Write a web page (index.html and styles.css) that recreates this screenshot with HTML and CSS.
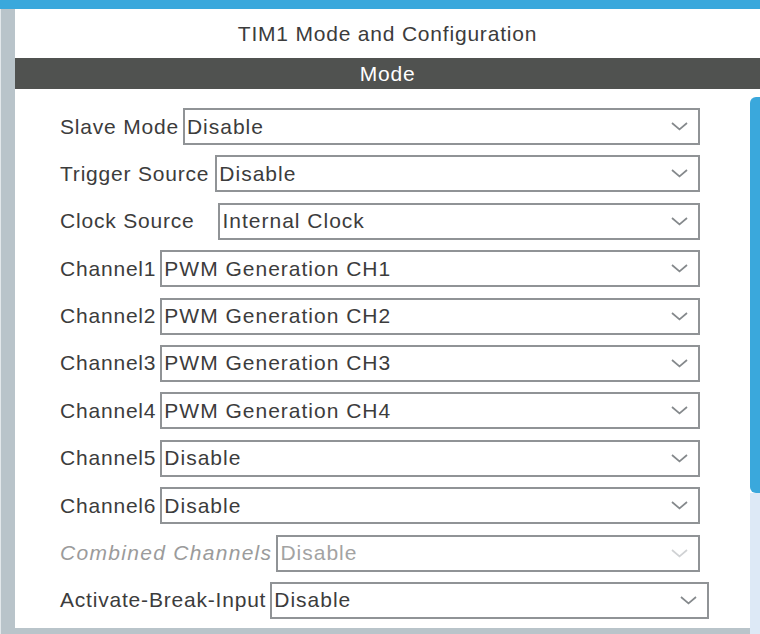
FILE: index.html
```html
<!DOCTYPE html>
<html>
<head>
<meta charset="utf-8">
<link rel="stylesheet" href="styles.css">
</head>
<body>
<div class="topbar"></div>
<div class="frame">
  <div class="side"></div>
  <div class="panel">
    <div class="title">TIM1 Mode and Configuration</div>
    <div class="section">Mode</div>
    <div class="body">
      <div class="left">
        <div class="form">
          <div class="row"><span class="label">Slave Mode</span><div class="select"><span class="val">Disable</span><svg class="chev" viewBox="0 0 17 9"><polyline points="1,1 8.5,7.5 16,1"/></svg></div></div>
          <div class="row"><span class="label trigger">Trigger Source</span><div class="select"><span class="val">Disable</span><svg class="chev" viewBox="0 0 17 9"><polyline points="1,1 8.5,7.5 16,1"/></svg></div></div>
          <div class="row"><span class="label clock">Clock Source</span><div class="select"><span class="val">Internal Clock</span><svg class="chev" viewBox="0 0 17 9"><polyline points="1,1 8.5,7.5 16,1"/></svg></div></div>
          <div class="row"><span class="label">Channel1</span><div class="select"><span class="val">PWM Generation CH1</span><svg class="chev" viewBox="0 0 17 9"><polyline points="1,1 8.5,7.5 16,1"/></svg></div></div>
          <div class="row"><span class="label">Channel2</span><div class="select"><span class="val">PWM Generation CH2</span><svg class="chev" viewBox="0 0 17 9"><polyline points="1,1 8.5,7.5 16,1"/></svg></div></div>
          <div class="row"><span class="label">Channel3</span><div class="select"><span class="val">PWM Generation CH3</span><svg class="chev" viewBox="0 0 17 9"><polyline points="1,1 8.5,7.5 16,1"/></svg></div></div>
          <div class="row"><span class="label">Channel4</span><div class="select"><span class="val">PWM Generation CH4</span><svg class="chev" viewBox="0 0 17 9"><polyline points="1,1 8.5,7.5 16,1"/></svg></div></div>
          <div class="row"><span class="label">Channel5</span><div class="select"><span class="val">Disable</span><svg class="chev" viewBox="0 0 17 9"><polyline points="1,1 8.5,7.5 16,1"/></svg></div></div>
          <div class="row"><span class="label">Channel6</span><div class="select"><span class="val">Disable</span><svg class="chev" viewBox="0 0 17 9"><polyline points="1,1 8.5,7.5 16,1"/></svg></div></div>
          <div class="row disabled"><span class="label">Combined Channels</span><div class="select"><span class="val">Disable</span><svg class="chev" viewBox="0 0 17 9"><polyline points="1,1 8.5,7.5 16,1"/></svg></div></div>
          <div class="row wide"><span class="label">Activate-Break-Input</span><div class="select"><span class="val">Disable</span><svg class="chev" viewBox="0 0 17 9"><polyline points="1,1 8.5,7.5 16,1"/></svg></div></div>
          <div class="row wide next"><span class="label"></span><div class="select"></div></div>
        </div>
        <div class="bottombar"></div>
      </div>
      <div class="scroll">
        <div class="scroll-gap"></div>
        <div class="thumb"></div>
        <div class="track"></div>
      </div>
    </div>
  </div>
</div>
</body>
</html>
```

FILE: styles.css
```css
html, body {
  margin: 0;
  padding: 0;
  width: 760px;
  height: 634px;
  overflow: hidden;
  background: #ffffff;
  font-family: "Liberation Sans", Arial, sans-serif;
}
.topbar {
  height: 9px;
  background: #3aa8dc;
}
.frame {
  display: flex;
  height: 625px;
}
.side {
  width: 14px;
  background: #b9c4ca;
  border-left: 1px solid #e3e8eb;
  flex: none;
}
.panel {
  flex: 1;
  display: flex;
  flex-direction: column;
  min-width: 0;
}
.title {
  height: 49px;
  display: flex;
  align-items: center;
  justify-content: center;
  font-size: 21px;
  letter-spacing: 0.8px;
  color: #3c3c3c;
}
.section {
  height: 31px;
  background: #505250;
  color: #ffffff;
  display: flex;
  align-items: center;
  justify-content: center;
  font-size: 21px;
  letter-spacing: 0.8px;
  padding-top: 1px;
  box-sizing: border-box;
}
.body {
  flex: 1;
  display: flex;
  min-height: 0;
}
.left {
  flex: 1;
  display: flex;
  flex-direction: column;
  min-width: 0;
}
.form {
  flex: 1;
  overflow: hidden;
  padding: 19px 0 0 45px;
  display: flex;
  flex-direction: column;
  gap: 10.4px;
}
.bottombar {
  height: 6px;
  background: #b9c4ca;
  flex: none;
}
.row {
  display: flex;
  align-items: center;
  height: 37px;
  flex: none;
  width: 640px;
}
.row.wide {
  width: 649px;
}
.label {
  font-size: 21px;
  letter-spacing: 0.8px;
  color: #3c3c3c;
  margin-right: 4px;
  white-space: nowrap;
}
.label.trigger {
  margin-right: 6px;
}
.label.clock {
  margin-right: 24px;
}
.select {
  flex: 1;
  height: 37px;
  box-sizing: border-box;
  border: 2px solid #909396;
  display: flex;
  align-items: center;
  justify-content: space-between;
  padding: 0 10px 0 2px;
  background: #ffffff;
}
.val {
  font-size: 21px;
  letter-spacing: 1px;
  color: #3c3c3c;
  white-space: nowrap;
}
.chev {
  width: 17px;
  height: 9px;
  fill: none;
  stroke: #85898c;
  stroke-width: 1.7;
}
.disabled .label {
  font-style: italic;
  letter-spacing: 1.3px;
  color: #9b9b9b;
}
.disabled .val {
  color: #a3a3a3;
}
.disabled .chev {
  stroke: #d0d2d4;
}
.next .label {
  width: 226px;
  margin: 0;
}
.scroll {
  width: 10px;
  flex: none;
  display: flex;
  flex-direction: column;
}
.scroll-gap {
  height: 8px;
  background: #ffffff;
}
.thumb {
  height: 396px;
  background: #3aa8dc;
  border-radius: 6px 0 0 6px;
}
.track {
  flex: 1;
  background: #dde9f6;
}
```
